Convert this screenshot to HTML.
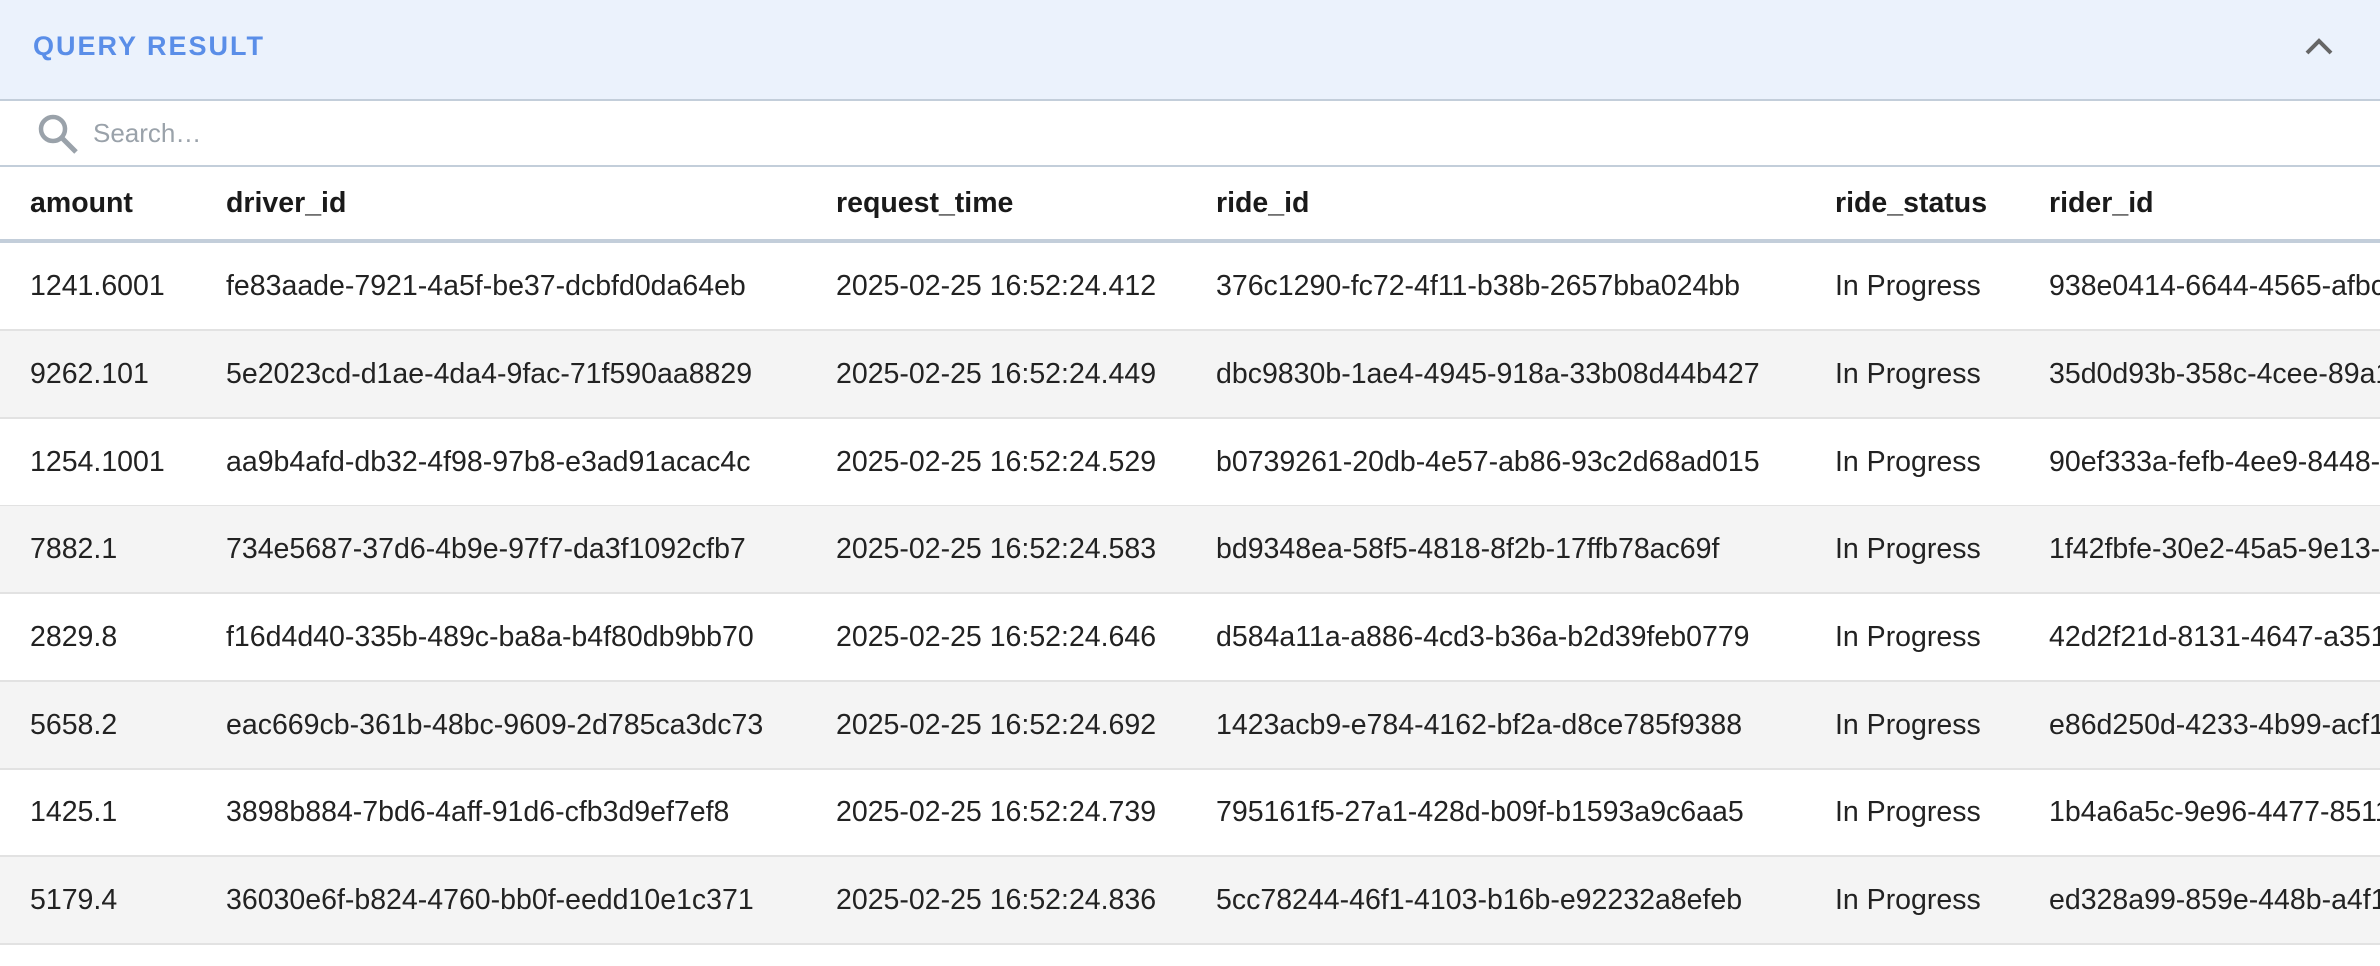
<!DOCTYPE html>
<html><head><meta charset="utf-8"><style>
html,body{margin:0;padding:0;width:2380px;height:966px;overflow:hidden;background:#fff;font-family:"Liberation Sans",sans-serif;}
.hdr{position:absolute;left:0;top:0;width:2380px;height:99px;background:#ebf2fc;border-bottom:2px solid #c3ceda;}
.title{position:absolute;left:33px;top:31px;font-size:27px;letter-spacing:2px;color:#5a8ee8;font-weight:bold;}
.chev{position:absolute;left:2304px;top:36px;}
.search{position:absolute;left:0;top:101px;width:2380px;height:64px;border-bottom:2px solid #c3ceda;}
.search span{position:absolute;left:93px;top:17px;font-size:26px;color:#9aa2aa;}
.row{position:absolute;left:0;width:2380px;height:86px;border-bottom:2px solid #e2e2e2;overflow:hidden;}
.row div{position:absolute;top:0;line-height:86px;font-size:28.5px;color:#222;white-space:nowrap;}
.th{top:167px;height:72px;border-bottom:4px solid #c3ceda;}
.th div{line-height:72px;font-weight:bold;font-size:28.5px;color:#1a1a1a;}
.alt{background:#f4f4f4;}
.c1{left:30px}.c2{left:226px}.c3{left:836px}.c4{left:1216px}.c5{left:1835px}.c6{left:2049px}
</style></head><body>
<div class="hdr"><div class="title">QUERY RESULT</div>
<svg class="chev" width="30" height="20" viewBox="0 0 30 20"><path d="M3 17 L15 5 L27 17" fill="none" stroke="#666" stroke-width="4"/></svg></div>
<div class="search">
<svg style="position:absolute;left:37px;top:12px" width="42" height="42" viewBox="0 0 42 42"><circle cx="16" cy="16" r="12" fill="none" stroke="#9aa2aa" stroke-width="4.5"/><path d="M25 25 L39 39" stroke="#9aa2aa" stroke-width="5"/></svg>
<span>Search…</span></div>
<div class="row th"><div class="c1">amount</div><div class="c2">driver_id</div><div class="c3">request_time</div><div class="c4">ride_id</div><div class="c5">ride_status</div><div class="c6">rider_id</div></div>
<div class="row" style="top:243px"><div class="c1">1241.6001</div><div class="c2">fe83aade-7921-4a5f-be37-dcbfd0da64eb</div><div class="c3">2025-02-25 16:52:24.412</div><div class="c4">376c1290-fc72-4f11-b38b-2657bba024bb</div><div class="c5">In Progress</div><div class="c6">938e0414-6644-4565-afbc-1a2b3c</div></div>
<div class="row alt" style="top:331px"><div class="c1">9262.101</div><div class="c2">5e2023cd-d1ae-4da4-9fac-71f590aa8829</div><div class="c3">2025-02-25 16:52:24.449</div><div class="c4">dbc9830b-1ae4-4945-918a-33b08d44b427</div><div class="c5">In Progress</div><div class="c6">35d0d93b-358c-4cee-89a1-2b3c</div></div>
<div class="row" style="top:419px"><div class="c1">1254.1001</div><div class="c2">aa9b4afd-db32-4f98-97b8-e3ad91acac4c</div><div class="c3">2025-02-25 16:52:24.529</div><div class="c4">b0739261-20db-4e57-ab86-93c2d68ad015</div><div class="c5">In Progress</div><div class="c6">90ef333a-fefb-4ee9-8448-1a2b</div></div>
<div class="row alt" style="top:506px"><div class="c1">7882.1</div><div class="c2">734e5687-37d6-4b9e-97f7-da3f1092cfb7</div><div class="c3">2025-02-25 16:52:24.583</div><div class="c4">bd9348ea-58f5-4818-8f2b-17ffb78ac69f</div><div class="c5">In Progress</div><div class="c6">1f42fbfe-30e2-45a5-9e13-1a2b</div></div>
<div class="row" style="top:594px"><div class="c1">2829.8</div><div class="c2">f16d4d40-335b-489c-ba8a-b4f80db9bb70</div><div class="c3">2025-02-25 16:52:24.646</div><div class="c4">d584a11a-a886-4cd3-b36a-b2d39feb0779</div><div class="c5">In Progress</div><div class="c6">42d2f21d-8131-4647-a351-2b3c</div></div>
<div class="row alt" style="top:682px"><div class="c1">5658.2</div><div class="c2">eac669cb-361b-48bc-9609-2d785ca3dc73</div><div class="c3">2025-02-25 16:52:24.692</div><div class="c4">1423acb9-e784-4162-bf2a-d8ce785f9388</div><div class="c5">In Progress</div><div class="c6">e86d250d-4233-4b99-acf1-2b3c</div></div>
<div class="row" style="top:769px"><div class="c1">1425.1</div><div class="c2">3898b884-7bd6-4aff-91d6-cfb3d9ef7ef8</div><div class="c3">2025-02-25 16:52:24.739</div><div class="c4">795161f5-27a1-428d-b09f-b1593a9c6aa5</div><div class="c5">In Progress</div><div class="c6">1b4a6a5c-9e96-4477-8511-2b3c</div></div>
<div class="row alt" style="top:857px"><div class="c1">5179.4</div><div class="c2">36030e6f-b824-4760-bb0f-eedd10e1c371</div><div class="c3">2025-02-25 16:52:24.836</div><div class="c4">5cc78244-46f1-4103-b16b-e92232a8efeb</div><div class="c5">In Progress</div><div class="c6">ed328a99-859e-448b-a4f1-2b3c</div></div>
</body></html>
